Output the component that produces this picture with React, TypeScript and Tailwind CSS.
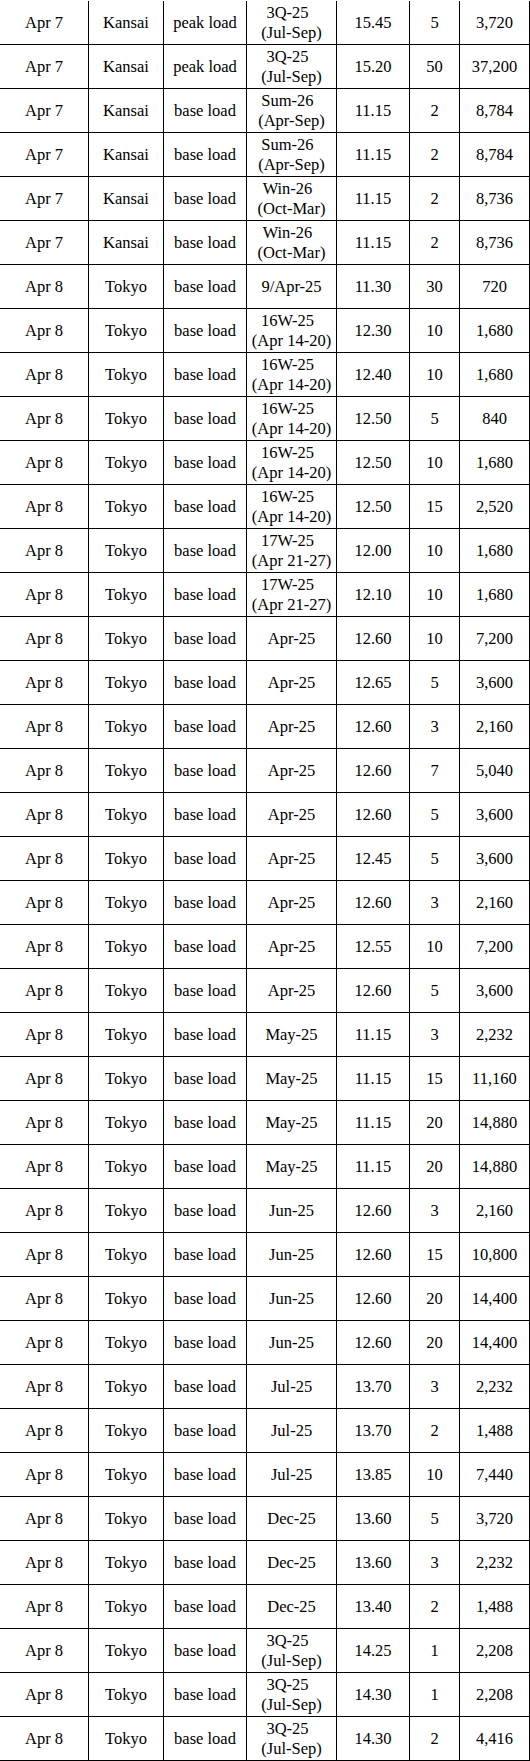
const rows: [string, string, string, string[], string, string, string][] = [
  ["Apr 7", "Kansai", "peak load", ["3Q-25", "(Jul-Sep)"], "15.45", "5", "3,720"],
  ["Apr 7", "Kansai", "peak load", ["3Q-25", "(Jul-Sep)"], "15.20", "50", "37,200"],
  ["Apr 7", "Kansai", "base load", ["Sum-26", "(Apr-Sep)"], "11.15", "2", "8,784"],
  ["Apr 7", "Kansai", "base load", ["Sum-26", "(Apr-Sep)"], "11.15", "2", "8,784"],
  ["Apr 7", "Kansai", "base load", ["Win-26", "(Oct-Mar)"], "11.15", "2", "8,736"],
  ["Apr 7", "Kansai", "base load", ["Win-26", "(Oct-Mar)"], "11.15", "2", "8,736"],
  ["Apr 8", "Tokyo", "base load", ["9/Apr-25"], "11.30", "30", "720"],
  ["Apr 8", "Tokyo", "base load", ["16W-25", "(Apr 14-20)"], "12.30", "10", "1,680"],
  ["Apr 8", "Tokyo", "base load", ["16W-25", "(Apr 14-20)"], "12.40", "10", "1,680"],
  ["Apr 8", "Tokyo", "base load", ["16W-25", "(Apr 14-20)"], "12.50", "5", "840"],
  ["Apr 8", "Tokyo", "base load", ["16W-25", "(Apr 14-20)"], "12.50", "10", "1,680"],
  ["Apr 8", "Tokyo", "base load", ["16W-25", "(Apr 14-20)"], "12.50", "15", "2,520"],
  ["Apr 8", "Tokyo", "base load", ["17W-25", "(Apr 21-27)"], "12.00", "10", "1,680"],
  ["Apr 8", "Tokyo", "base load", ["17W-25", "(Apr 21-27)"], "12.10", "10", "1,680"],
  ["Apr 8", "Tokyo", "base load", ["Apr-25"], "12.60", "10", "7,200"],
  ["Apr 8", "Tokyo", "base load", ["Apr-25"], "12.65", "5", "3,600"],
  ["Apr 8", "Tokyo", "base load", ["Apr-25"], "12.60", "3", "2,160"],
  ["Apr 8", "Tokyo", "base load", ["Apr-25"], "12.60", "7", "5,040"],
  ["Apr 8", "Tokyo", "base load", ["Apr-25"], "12.60", "5", "3,600"],
  ["Apr 8", "Tokyo", "base load", ["Apr-25"], "12.45", "5", "3,600"],
  ["Apr 8", "Tokyo", "base load", ["Apr-25"], "12.60", "3", "2,160"],
  ["Apr 8", "Tokyo", "base load", ["Apr-25"], "12.55", "10", "7,200"],
  ["Apr 8", "Tokyo", "base load", ["Apr-25"], "12.60", "5", "3,600"],
  ["Apr 8", "Tokyo", "base load", ["May-25"], "11.15", "3", "2,232"],
  ["Apr 8", "Tokyo", "base load", ["May-25"], "11.15", "15", "11,160"],
  ["Apr 8", "Tokyo", "base load", ["May-25"], "11.15", "20", "14,880"],
  ["Apr 8", "Tokyo", "base load", ["May-25"], "11.15", "20", "14,880"],
  ["Apr 8", "Tokyo", "base load", ["Jun-25"], "12.60", "3", "2,160"],
  ["Apr 8", "Tokyo", "base load", ["Jun-25"], "12.60", "15", "10,800"],
  ["Apr 8", "Tokyo", "base load", ["Jun-25"], "12.60", "20", "14,400"],
  ["Apr 8", "Tokyo", "base load", ["Jun-25"], "12.60", "20", "14,400"],
  ["Apr 8", "Tokyo", "base load", ["Jul-25"], "13.70", "3", "2,232"],
  ["Apr 8", "Tokyo", "base load", ["Jul-25"], "13.70", "2", "1,488"],
  ["Apr 8", "Tokyo", "base load", ["Jul-25"], "13.85", "10", "7,440"],
  ["Apr 8", "Tokyo", "base load", ["Dec-25"], "13.60", "5", "3,720"],
  ["Apr 8", "Tokyo", "base load", ["Dec-25"], "13.60", "3", "2,232"],
  ["Apr 8", "Tokyo", "base load", ["Dec-25"], "13.40", "2", "1,488"],
  ["Apr 8", "Tokyo", "base load", ["3Q-25", "(Jul-Sep)"], "14.25", "1", "2,208"],
  ["Apr 8", "Tokyo", "base load", ["3Q-25", "(Jul-Sep)"], "14.30", "1", "2,208"],
  ["Apr 8", "Tokyo", "base load", ["3Q-25", "(Jul-Sep)"], "14.30", "2", "4,416"],
];

const cell =
  "h-[44px] flex flex-col items-center justify-center border-r border-b border-black text-center whitespace-nowrap";

export default function App() {
  return (
    <div
      className="w-[530px] bg-white pt-px text-black text-[16.5px] leading-5"
      style={{ fontFamily: '"Liberation Serif", "Times New Roman", serif' }}
    >
      <div className="grid grid-cols-[89px_75px_83px_90px_73px_50px_70px]">
        {rows.map((r, i) => (
          <div key={i} className="contents">
            <div className={cell}>{r[0]}</div>
            <div className={cell}>{r[1]}</div>
            <div className={cell}>{r[2]}</div>
            <div className={cell}>
              {r[3].length > 1 ? (
                <>
                  <span className="block h-5 leading-5 pr-[8px]">{r[3][0]}</span>
                  <span className="block h-5 leading-5">{r[3][1]}</span>
                </>
              ) : (
                r[3][0]
              )}
            </div>
            <div className={cell}>{r[4]}</div>
            <div className={cell}>{r[5]}</div>
            <div className={cell}>{r[6]}</div>
          </div>
        ))}
      </div>
    </div>
  );
}
